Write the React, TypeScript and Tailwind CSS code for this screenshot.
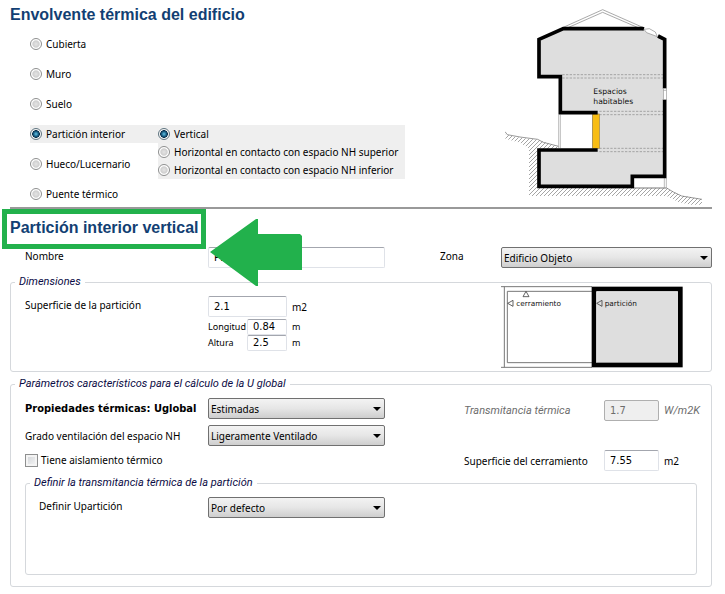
import type { ReactNode } from "react";

const uiFont = "font-['Noto_Sans','Open_Sans',sans-serif]";

const radioClass =
  "size-3 shrink-0 appearance-none rounded-full border border-[#8e8f8f] bg-[radial-gradient(circle,#e4e4e4_0,#cfcfcf_45%,#fff_60%)] checked:border-[#5f7480] checked:bg-[radial-gradient(circle_at_50%_50%,#63c5e8_0,#165a80_35%,#0b3350_50%,#f4f4f4_58%)]";

const inputClass =
  "min-w-0 rounded-[2px] border border-[#dfe2e8] border-t-[#a3a6ae] bg-white font-['DejaVu_Sans_Condensed','DejaVu_Sans',sans-serif] text-[11px] text-black";

type RadioProps = { name: string; label: string; checked?: boolean };

function Radio({ name, label, checked }: RadioProps) {
  return (
    <label className="flex h-[18px] items-center gap-1 whitespace-nowrap">
      <input type="radio" name={name} defaultChecked={checked} className={radioClass} />
      {label}
    </label>
  );
}

function Combo({ id, options }: { id: string; options: string[] }) {
  return (
    <div className="relative h-[21px] w-full">
      <select
        id={id}
        className="block h-[21px] w-full appearance-none rounded-[2px] border border-[#707070] bg-linear-to-b from-[#f3f3f3] from-0% via-[#e6e6e6] via-50% to-[#cecece] pr-5 pl-[2px] text-[10px] text-black"
      >
        {options.map((o) => (
          <option key={o}>{o}</option>
        ))}
      </select>
      <svg viewBox="0 0 8 4" className="pointer-events-none absolute top-[9px] right-1 h-1 w-2">
        <path d="M0 0H8L4 4Z" />
      </svg>
    </div>
  );
}

function Group({ title, className, children }: { title: string; className: string; children: ReactNode }) {
  return (
    <fieldset className={`min-w-0 rounded-[3px] border border-[#d5d8dc] ${className}`}>
      <legend className="ml-1 h-4 px-1 font-[Roboto,sans-serif] text-[11px] leading-4 text-[#0b0b45] italic">{title}</legend>
      {children}
    </fieldset>
  );
}

function BuildingSection() {
  return (
    <svg viewBox="15 24 600 594" className="h-[198px] w-[200px] shrink-0" role="img" aria-label="Espacios habitables">
      <defs>
        <pattern id="hatch" width="12" height="12" patternUnits="userSpaceOnUse">
          <path d="M-1 13L13 -1M-2 2L2 -2M10 14L14 10" stroke="#777" strokeWidth="2" />
        </pattern>
      </defs>
      <path
        d="M16 404L60 413L113 419L176 441V447H113V564H500L540 586L606 598V614H572L535 606L500 588H87V445L60 428L16 416Z"
        fill="url(#hatch)"
      />
      <path d="M15 395L22 404L60 411L113 418L130 427L176 439M400 564H500L520 576L545 588L606 598" fill="none" stroke="#666" strokeWidth="2" />
      <path
        d="M117 118L190 87H430L494 118V528H397V559H117V450H293V338H181V230H117Z"
        fill="#dedede"
      />
      <path d="M190 82L308 29L428 82M206 82L308 37L412 82" fill="none" stroke="#999" strokeWidth="2.5" />
      <path d="M187 224H490M187 234H490M298 334H490M298 344H490M298 445H490M298 455H490" stroke="#888" strokeWidth="2" strokeDasharray="7 4" />
      <path d="M176 344V444M181 344V444M278 344V444M293 564H499M499 534V564M493 534V564" fill="none" stroke="#999" strokeWidth="2" />
      <rect x="278" y="342" width="20" height="103" fill="#f8bd14" stroke="#9c813b" strokeWidth="2" />
      <path
        d="M432 87L428 86H190L117 118V230H181V338H293M293 450H117V559H397V529H494V298M494 266V118L474 108"
        fill="none"
        stroke="#000"
        strokeWidth="11"
      />
      <path d="M432 88L440 98L472 110L466 96L448 86Z" fill="#fff" stroke="#888" strokeWidth="2" />
      <rect x="490" y="265" width="9" height="34" fill="#fff" stroke="#999" strokeWidth="2" />
      <path d="M490 271H499" stroke="#999" strokeWidth="2" />
      <g className="font-['DejaVu_Sans',sans-serif]" fontSize="23" fill="#111">
        <text x="280" y="281">Espacios</text>
        <text x="280" y="311">habitables</text>
      </g>
    </svg>
  );
}

function PartitionPlan() {
  return (
    <svg viewBox="243 168 546 246" className="-mt-1 h-[82px] w-[182px] shrink-0" role="img" aria-label="Cerramiento y partición">
      <path d="M243 170H516M243 412H516M253 170V412M262 184H516M262 398H516M262 184V398" fill="none" stroke="#777" strokeWidth="3" />
      <rect x="522" y="177" width="259" height="228" fill="#dedede" stroke="#000" strokeWidth="14" />
      <path d="M530 398V185H773" fill="none" stroke="#fff" strokeWidth="2" />
      <path d="M309 200L318 184L327 200ZM279 211V229L263 220ZM546 211V229L530 220Z" fill="none" stroke="#444" strokeWidth="2.5" />
      <g className="font-['DejaVu_Sans',sans-serif]" fontSize="22" fill="#111">
        <text x="289" y="227">cerramiento</text>
        <text x="554" y="227">partición</text>
      </g>
    </svg>
  );
}

export default function App() {
  return (
    <main className={`min-h-screen bg-white pr-[13px] pb-1 pl-[10px] text-[10px] leading-4 text-black ${uiFont}`}>
      <section className="flex items-start justify-between border-b-2 border-[#999] pb-px">
        <div className="pt-[3px] pb-[3px]">
          <h1 className="font-['Liberation_Sans',Arial,sans-serif] text-[16px] leading-6 font-bold text-[#123f73]">
            Envolvente térmica del edificio
          </h1>
          <div className="mt-2 ml-5 flex items-start">
            <div className="flex w-32 flex-col gap-3">
              <Radio name="tipo" label="Cubierta" />
              <Radio name="tipo" label="Muro" />
              <Radio name="tipo" label="Suelo" />
              <div className="bg-[#efefef]">
                <Radio name="tipo" label="Partición interior" checked />
              </div>
              <Radio name="tipo" label="Hueco/Lucernario" />
              <Radio name="tipo" label="Puente térmico" />
            </div>
            <div className="mt-[90px] w-[247px] bg-[#efefef]">
              <Radio name="posicion" label="Vertical" checked />
              <Radio name="posicion" label="Horizontal en contacto con espacio NH superior" />
              <Radio name="posicion" label="Horizontal en contacto con espacio NH inferior" />
            </div>
          </div>
        </div>
        <div className="mr-[7px] pt-2">
          <BuildingSection />
        </div>
      </section>

      <section>
        <div className="relative w-[188px]">
          <h2 className="font-['Liberation_Sans',Arial,sans-serif] text-[16px] leading-[38px] font-bold whitespace-nowrap text-[#123f73]">
            Partición interior vertical
          </h2>
          <div className="pointer-events-none absolute -inset-x-2 top-0 h-10 border-[5px] border-[#22b14c]" />
        </div>

        <div className="flex items-start">
          <label htmlFor="nombre" className="w-[198px] pt-px pl-[15px]">
            Nombre
          </label>
          <div className="relative w-[177px]">
            <input id="nombre" defaultValue="P1" className={`block h-[21px] w-full pl-[5px] ${inputClass}`} />
            <svg viewBox="0 0 92 68" className="pointer-events-none absolute -top-7 left-[2px] h-[68px] w-[92px]">
              <path d="M0 33L46 0H48V15H90L92 17V51H48V67H46Z" fill="#22b14c" />
            </svg>
          </div>
          <label htmlFor="zona" className="ml-[55px] w-[61px] pt-px">
            Zona
          </label>
          <div className="flex-1">
            <Combo id="zona" options={["Edificio Objeto"]} />
          </div>
        </div>

        <Group title="Dimensiones" className="mt-[6px] h-[98px]">
          <div className="flex items-start pr-7">
            <label htmlFor="superficie" className="w-[197px] pt-[7px] pl-[14px]">
              Superficie de la partición
            </label>
            <div className="flex-1 pt-[6px]">
              <div className="flex items-center gap-[5px]">
                <input id="superficie" defaultValue="2.1" className={`h-[21px] w-[79px] pl-[5px] ${inputClass}`} />
                <span>m2</span>
              </div>
              <div className="mt-[2px] flex items-center text-[9px]">
                <label htmlFor="longitud" className="w-[39px]">Longitud</label>
                <input id="longitud" defaultValue="0.84" className={`h-4 w-10 pl-[5px] ${inputClass}`} />
                <span className="ml-[5px]">m</span>
              </div>
              <div className="flex items-center text-[9px]">
                <label htmlFor="altura" className="w-[39px]">Altura</label>
                <input id="altura" defaultValue="2.5" className={`h-4 w-10 pl-[5px] ${inputClass}`} />
                <span className="ml-[5px]">m</span>
              </div>
            </div>
            <PartitionPlan />
          </div>
        </Group>

        <Group title="Parámetros característicos para el cálculo de la U global" className="mt-1 pb-[11px]">
          <div className="flex items-start justify-between pt-[6px] pl-[14px]">
            <div className="grid grid-cols-[183px_177px] items-center gap-y-[6px]">
              <label htmlFor="propiedades" className="font-['DejaVu_Sans_Condensed','DejaVu_Sans',sans-serif] text-[11px] font-bold whitespace-nowrap">
                Propiedades térmicas: Uglobal
              </label>
              <Combo id="propiedades" options={["Estimadas"]} />
              <label htmlFor="ventilacion">Grado ventilación del espacio NH</label>
              <Combo id="ventilacion" options={["Ligeramente Ventilado"]} />
              <label className="flex items-center gap-[3px]">
                <input
                  type="checkbox"
                  className="size-[13px] appearance-none border border-[#8e8f8f] bg-linear-to-br from-[#cfd2d6] to-[#f8f8f8] shadow-[inset_0_0_0_2px_#f4f4f4]"
                />
                Tiene aislamiento térmico
              </label>
            </div>
            <div className="grid grid-cols-[140px_55px_52px] items-center gap-y-[29px] pt-[2px]">
              <label htmlFor="transmitancia" className="font-[Roboto,sans-serif] text-[11px] text-[#6d6d6d] italic">Transmitancia térmica</label>
              <input id="transmitancia" disabled defaultValue="1.7" className="h-[21px] min-w-0 rounded-[2px] border border-[#afafaf] bg-[#efefef] pl-[5px] font-['DejaVu_Sans_Condensed','DejaVu_Sans',sans-serif] text-[11px] text-[#6d6d6d]" />
              <span className="pl-[5px] font-[Roboto,sans-serif] text-[11px] text-[#6d6d6d] italic">W/m2K</span>
              <label htmlFor="cerramiento" className="whitespace-nowrap">Superficie del cerramiento</label>
              <input id="cerramiento" defaultValue="7.55" className={`h-[21px] pl-[5px] ${inputClass}`} />
              <span className="pl-[5px]">m2</span>
            </div>
          </div>
          <Group title="Definir la transmitancia térmica de la partición" className="mx-[14px] mt-1 h-[100px]">
            <div className="flex items-start pt-[6px] pl-[13px]">
              <label htmlFor="uparticion" className="w-[169px] pt-px">Definir Upartición</label>
              <div className="w-[177px]">
                <Combo id="uparticion" options={["Por defecto"]} />
              </div>
            </div>
          </Group>
        </Group>
      </section>
    </main>
  );
}
